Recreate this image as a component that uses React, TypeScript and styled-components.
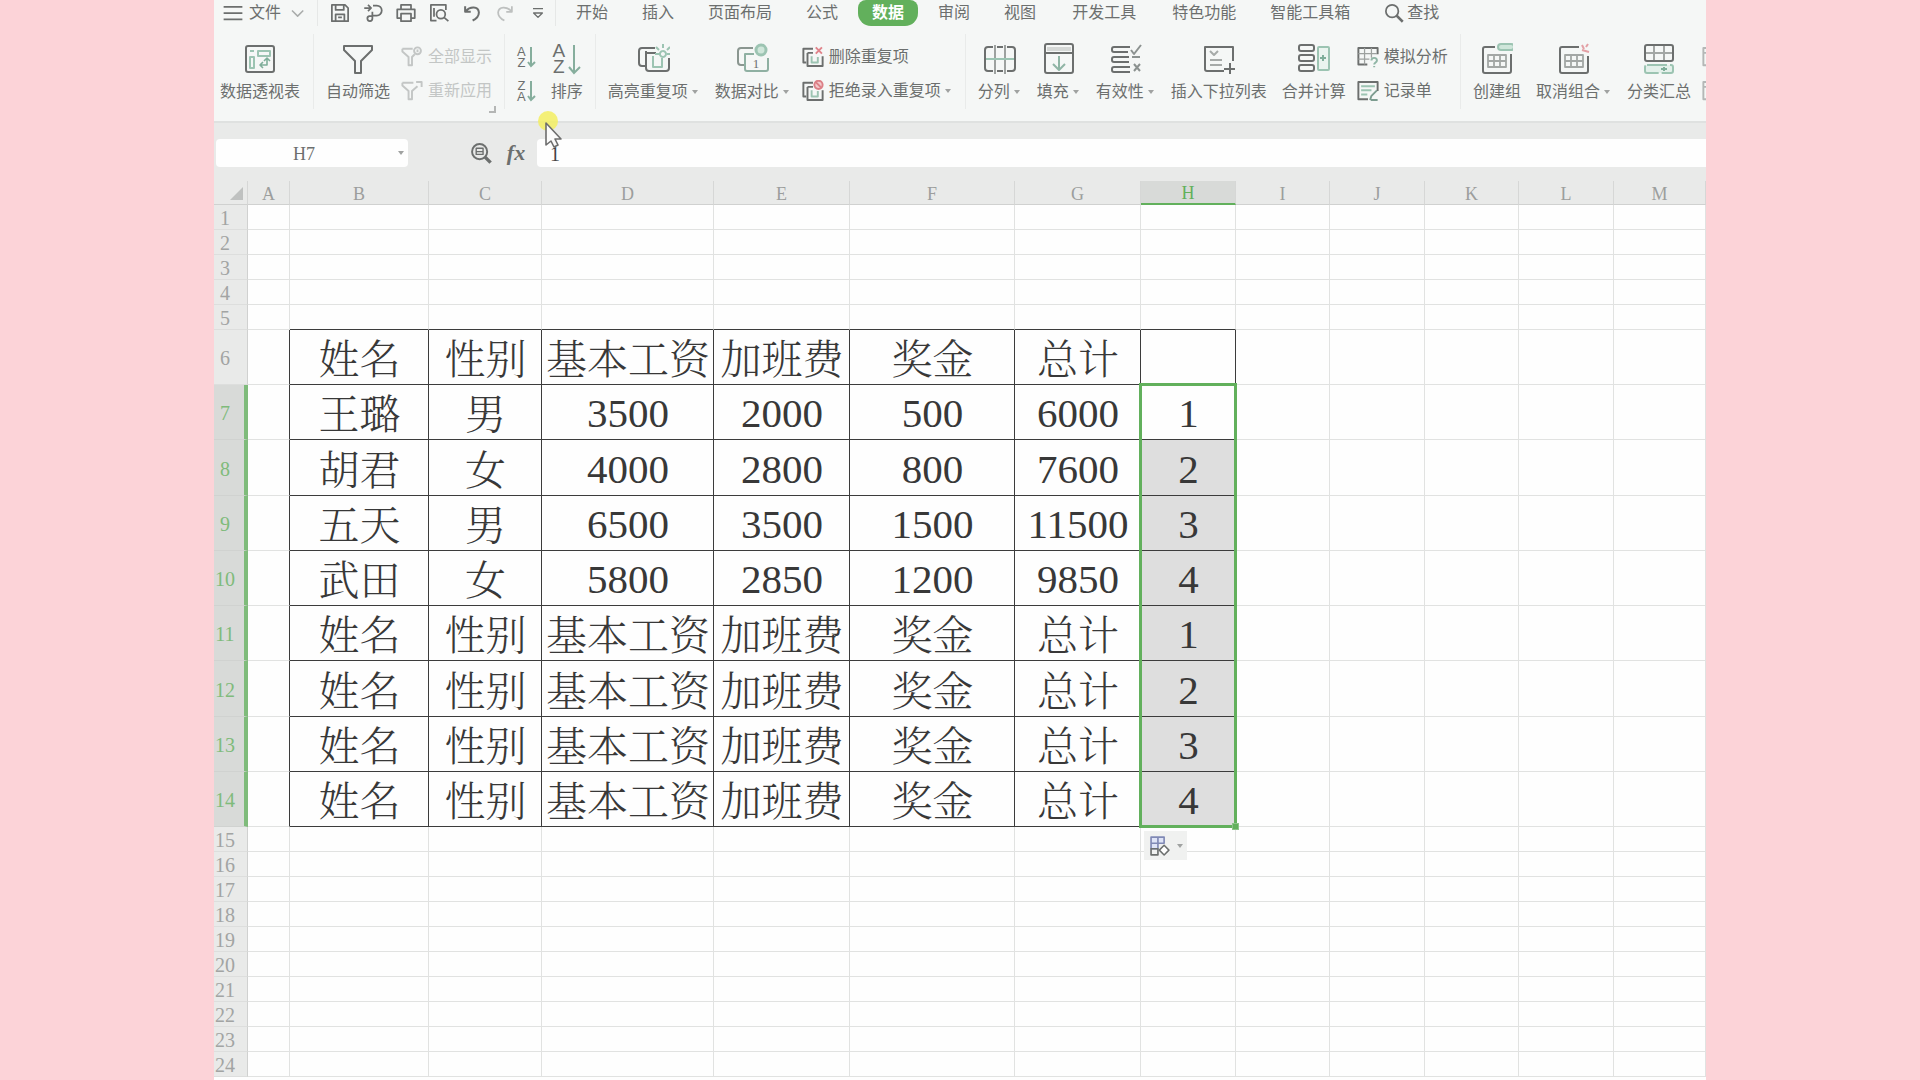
import React from "react";
import styled, { createGlobalStyle, css } from "styled-components";

const GREEN = "#62b05c";
const INK = "#6c6f6e";
const MINT = "#9cc4b2";
const UI_FONT = `"Liberation Sans", "Noto Sans CJK SC", sans-serif`;
const SHEET_FONT = `"Liberation Serif", "Noto Serif CJK SC", "Noto Sans CJK SC", serif`;

const GlobalStyle = createGlobalStyle`
  *, *::before, *::after { box-sizing: border-box; }
  body { margin: 0; background: #fcd3d8; font-family: ${UI_FONT}; }
  button, input { font: inherit; color: inherit; }
  svg { display: block; flex: none; }
`;

const Page = styled.div`
  height: 100vh;
  padding: 0 214px;
  overflow: hidden;
`;

const Window = styled.main`
  position: relative;
  display: flex;
  flex-direction: column;
  height: 100%;
  overflow: hidden;
  background: #fefefe;
  color: ${INK};
`;

const plainButton = css`
  border: 0;
  padding: 0;
  margin: 0;
  background: none;
  white-space: nowrap;
  cursor: pointer;
`;

/* ---------- menu bar ---------- */

const MenuBar = styled.header`
  display: flex;
  align-items: center;
  height: 26px;
  padding-left: 9px;
  background: #f5f7f6;
  font-size: 16px;
  line-height: 24px;
  flex: none;
`;

const FileButton = styled.button`
  ${plainButton}
  display: flex;
  align-items: center;
  gap: 6px;
  padding-right: 10px;
`;

const QuickTools = styled.div`
  display: flex;
  align-items: center;
  gap: 13px;
  height: 26px;
  padding: 0 7px 0 12px;
  border-left: 1px solid #e6e8e7;
  border-right: 1px solid #e6e8e7;
`;

const IconButton = styled.button<{ $faded?: boolean }>`
  ${plainButton}
  opacity: ${(p) => (p.$faded ? 0.4 : 1)};
`;

const Tabs = styled.nav`
  display: flex;
  gap: 6px;
  margin-left: 6px;
`;

const Tab = styled.button<{ $active?: boolean; $wide?: boolean }>`
  ${plainButton}
  height: 26px;
  padding: 0 ${(p) => (p.$wide ? 16 : 14)}px;
  ${(p) =>
    p.$active &&
    css`
      background: ${GREEN};
      color: #fff;
      font-weight: 700;
      border-radius: 8px 8px 13px 13px;
    `}
`;

const SearchButton = styled.button`
  ${plainButton}
  display: flex;
  align-items: center;
  gap: 3px;
  margin-left: 20px;
`;

/* ---------- ribbon ---------- */

const Ribbon = styled.section`
  display: flex;
  height: 97px;
  padding: 8px 0 12px;
  background: #f5f7f6;
  border-bottom: 2px solid #dfe1e0;
  font-size: 16px;
  line-height: 24px;
  overflow: hidden;
  flex: none;
`;

const Group = styled.div<{ $first?: boolean }>`
  position: relative;
  display: flex;
  gap: 15px;
  flex: none;
  padding: ${(p) => (p.$first ? "0 13px 0 6px" : "0 12px")};
  border-right: 1px solid #e9ebea;
`;

const Corner = styled.span`
  position: absolute;
  right: 8px;
  bottom: -4px;
  width: 7px;
  height: 7px;
  border-right: 2px solid #b4b6b5;
  border-bottom: 2px solid #b4b6b5;
`;

const Tool = styled.button`
  ${plainButton}
  display: flex;
  flex-direction: column;
  align-items: center;
  gap: 5px;
  height: 72px;
  padding-top: 9px;
`;

const ToolLabel = styled.span`
  display: flex;
  align-items: center;
`;

const Caret = styled.i`
  margin: 0 2px 0 4px;
  border: 3px solid transparent;
  border-top: 4px solid #a0a2a1;
  border-bottom: 0;
`;

const Stack = styled.div<{ $tight?: boolean }>`
  display: flex;
  flex-direction: column;
  gap: 10px;
  padding-top: 11px;
  margin-left: ${(p) => (p.$tight ? -4 : 0)}px;
`;

const SmallTool = styled.button`
  ${plainButton}
  display: flex;
  align-items: center;
  gap: 5px;
  height: 24px;
  &:disabled { color: #c3c6c5; cursor: default; }
`;

const SortMark = styled.span<{ $small?: boolean }>`
  display: flex;
  align-items: center;
  gap: ${(p) => (p.$small ? 1 : 3)}px;
  height: ${(p) => (p.$small ? 24 : 32)}px;
  font-size: ${(p) => (p.$small ? 13 : 19)}px;
  line-height: ${(p) => (p.$small ? 11 : 16)}px;
`;

const SortLetters = styled.span`
  display: flex;
  flex-direction: column;
  align-items: center;
`;

/* ---------- formula bar ---------- */

const FormulaBar = styled.section`
  display: flex;
  align-items: center;
  height: 58px;
  padding: 16px 0 14px 2px;
  background: #e9eae9;
  font-family: ${SHEET_FONT};
  font-size: 20px;
  flex: none;
`;

const NameBox = styled.div`
  display: flex;
  align-items: center;
  width: 192px;
  height: 28px;
  margin-right: 62px;
  background: #fefefe;
  border-radius: 4px;
`;

const NameInput = styled.input`
  flex: 1;
  min-width: 0;
  height: 28px;
  padding: 2px 0 0;
  border: 0;
  background: none;
  text-align: center;
  font-size: 18px;
  outline: 0;
`;

const CaretButton = styled.button`
  ${plainButton}
  display: flex;
  align-items: center;
  justify-content: center;
  width: 16px;
  height: 28px;
`;

const FxButton = styled.button`
  ${plainButton}
  width: 22px;
  margin: 0 10px 0 13px;
  font-style: italic;
  font-weight: 700;
  font-size: 22px;
  line-height: 28px;
`;

const FormulaInput = styled.input`
  flex: 1;
  min-width: 0;
  height: 28px;
  padding: 2px 0 0 13px;
  border: 0;
  border-radius: 4px 0 0 4px;
  background: #fefefe;
  color: #444;
  outline: 0;
`;

const Pointer = styled.div`
  position: absolute;
  left: 324px;
  top: 111px;
  pointer-events: none;
`;

/* ---------- sheet ---------- */

const SheetArea = styled.div`
  position: relative;
  flex: 1;
  min-height: 0;
  overflow: hidden;
`;

const Grid = styled.table`
  width: 100%;
  table-layout: fixed;
  border-collapse: separate;
  border-spacing: 0;
  font-family: ${SHEET_FONT};
`;

const ColHead = styled.th<{ $on?: boolean }>`
  height: 24px;
  padding: 2px 0 0;
  background: ${(p) => (p.$on ? "#d8dad8" : "#e9eae9")};
  border-right: 1px solid #d6d7d6;
  border-bottom: ${(p) => (p.$on ? `2px solid ${GREEN}` : "1px solid #d0d1d0")};
  color: ${(p) => (p.$on ? GREEN : "#9c9e9d")};
  font-size: 18px;
  font-weight: 400;
  line-height: 20px;
`;

const SelectAll = styled.i`
  display: block;
  width: 13px;
  height: 13px;
  margin-left: 16px;
  background: #bfc1c0;
  clip-path: polygon(100% 0, 100% 100%, 0 100%);
`;

const RowHead = styled.th<{ $on?: boolean }>`
  padding: 2px ${(p) => (p.$on ? 8 : 11)}px 0 0;
  background: ${(p) => (p.$on ? "#d8dad8" : "#e9eae9")};
  border-right: ${(p) => (p.$on ? "4px solid #7fbb7b" : "1px solid #d0d1d0")};
  border-bottom: 1px solid ${(p) => (p.$on ? "#d0d2d0" : "#dddedd")};
  color: ${(p) => (p.$on ? "#7fbb7b" : "#a2a4a3")};
  font-size: 20px;
  font-weight: 400;
  line-height: 20px;
`;

const Cell = styled.td<{ $right?: boolean; $bottom?: boolean; $shade?: boolean; $digits?: boolean }>`
  padding: ${(p) => (p.$digits ? 2 : 6)}px 0 0 1px;
  background: ${(p) => (p.$shade ? "#dedede" : "#fefefe")};
  border-right: 1px solid ${(p) => (p.$right ? "#3c3c3c" : "#e1e2e1")};
  border-bottom: 1px solid ${(p) => (p.$bottom ? "#3c3c3c" : "#e1e2e1")};
  color: #383838;
  font-size: 41px;
  font-weight: 300;
  line-height: 48px;
  text-align: center;
  white-space: nowrap;
`;

const Selection = styled.div`
  position: absolute;
  border: 3px solid ${GREEN};
  pointer-events: none;
  &::after {
    content: "";
    position: absolute;
    right: -5px;
    bottom: -5px;
    width: 7px;
    height: 7px;
    background: ${GREEN};
    border: 1px solid #8cc488;
  }
`;

const FillOptions = styled.button`
  ${plainButton}
  position: absolute;
  display: flex;
  align-items: center;
  gap: 2px;
  width: 43px;
  height: 29px;
  padding-left: 5px;
  background: #f0f1f0;
`;

/* ---------- icons ---------- */

type IconProps = { size?: number; children: React.ReactNode };

const Icon = ({ size = 32, children }: IconProps) => (
  <svg
    width={size}
    height={size}
    viewBox="0 0 32 32"
    fill="none"
    stroke={INK}
    strokeWidth={size < 24 ? 2.8 : 2}
    strokeLinejoin="round"
    aria-hidden="true"
  >
    {children}
  </svg>
);

const MenuIcon = () => (
  <Icon size={20}><path d="M1 6h30M1 16h30M1 26h30" /></Icon>
);
const ChevronIcon = () => (
  <Icon size={20}><path d="M8 12l9 9 9-9" stroke="#a9acab" strokeWidth="2.4" /></Icon>
);
const SaveIcon = () => (
  <Icon size={20}><path d="M3 3h21l5 5v21H3zM9 3v8h13V3M9 29V18h14v11M13 23h6" /></Icon>
);
const ExportIcon = () => (
  <Icon size={20}>
    <path d="M2 8h10M8 3l5 5-5 5M16 4h6a8 8 0 010 16h-7M15 14v11a4 4 0 11-5-4h5" />
  </Icon>
);
const PrintIcon = () => (
  <Icon size={20}><path d="M8 10V3h16v7M8 24H2V10h28v14h-6M8 17h16v12H8z" /></Icon>
);
const PreviewIcon = () => (
  <Icon size={20}>
    <path d="M12 28H3V3h24v8M8 8v14" />
    <circle cx="19" cy="18" r="7" />
    <path d="M24 23l7 6" />
  </Icon>
);
const UndoIcon = () => (
  <Icon size={20}><path d="M5 5v9h9M6 13c7-8 20-8 21 2 0 6-4 10-10 13" strokeWidth="3.2" /></Icon>
);
const RedoIcon = () => (
  <Icon size={20}><path d="M27 5v9h-9M26 13C19 5 6 5 5 15c0 6 4 10 10 13" /></Icon>
);
const MoreIcon = () => (
  <Icon size={20}><path d="M8 9h16M9 16l7 7 7-7z" strokeWidth="2.2" /></Icon>
);
const SearchIcon = () => (
  <Icon size={20}><circle cx="13" cy="13" r="10" /><path d="M20 20l10 10" strokeWidth="4" /></Icon>
);
const ZoomIcon = () => (
  <Icon size={22}>
    <circle cx="14" cy="14" r="11" />
    <path d="M9 9h10v9H9zM9 14h10" strokeWidth="2" />
    <path d="M22 22l8 8" strokeWidth="5" />
  </Icon>
);

const PivotIcon = () => (
  <Icon>
    <rect x="2" y="3" width="28" height="26" rx="2" />
    <path d="M6 8h4M14 8h12v5H14zM6 14h4v11H6z" stroke={MINT} />
    <path d="M23 15v7h-7M19 19l-3 3 3 3M20 18l3-3 3 3" stroke="#7fae9a" strokeWidth="1.6" />
  </Icon>
);
const FunnelIcon = () => (
  <Icon><path d="M2 3h28v4L19 18v12h-6V18L2 7z" /></Icon>
);
const ShowAllIcon = () => (
  <Icon size={22}>
    <g stroke="#c3c6c5"><path d="M2 4h15M2 4v4l9 8v12h5V16l4-4" /><circle cx="24" cy="7" r="5" /><path d="M24 5v4" /></g>
  </Icon>
);
const ReapplyIcon = () => (
  <Icon size={22}>
    <g stroke="#c3c6c5"><path d="M2 4h16M2 4v4l9 8v12h5V16l8-7" /><path d="M22 3h8v7" /></g>
  </Icon>
);

const SortIcon = ({ letters, small }: { letters: string[]; small?: boolean }) => (
  <SortMark $small={small} aria-hidden="true">
    <SortLetters>
      {letters.map((letter) => <span key={letter}>{letter}</span>)}
    </SortLetters>
    <svg width={small ? 9 : 13} height={small ? 22 : 32} viewBox={small ? "0 0 9 22" : "0 0 13 32"}>
      <path
        d={small ? "M4 1v19M1 16l3 4 4-4" : "M6 2v28M1 24l5 6 6-6"}
        fill="none"
        stroke="#86ae9d"
        strokeWidth={2}
      />
    </svg>
  </SortMark>
);

const HighlightIcon = () => (
  <Icon>
    <path d="M7 23H4a3 3 0 01-3-3V8a3 3 0 013-3h13M8 8v17a3 3 0 003 3h17a3 3 0 003-3V15M8 10h10" />
    <path d="M15 13v11h9V15" stroke={MINT} />
    <path d="M25 8a3 3 0 11-.1 0M25 1v4M18 4l3 3M32 4l-3 3M17 11h4M29 11h4" stroke={MINT} />
  </Icon>
);
const CompareIcon = () => (
  <Icon>
    <path d="M7 22H4a3 3 0 01-3-3V8a3 3 0 013-3h12" stroke="#8a9690" />
    <path d="M17 11H8v15a2 2 0 002 2h19a2 2 0 002-2V15" stroke="#8fb0a2" />
    <text x="19" y="25" fontSize="13" textAnchor="middle" fill={INK} stroke="none" fontFamily="Liberation Serif, serif">1</text>
    <circle cx="24" cy="7" r="5" stroke={MINT} strokeWidth="3" fill="#cfe6da" />
  </Icon>
);
const RemoveDupIcon = () => (
  <Icon size={22}>
    <path d="M6 24H2V4h14M8 10v19h22V15M8 10h8" />
    <path d="M14 15v9h9v-8" stroke={MINT} />
    <path d="M20 2l9 9M29 2l-9 9" stroke="#e0838a" />
  </Icon>
);
const RejectDupIcon = () => (
  <Icon size={22}>
    <path d="M6 24H2V4h14M8 10v19h22V15M8 10h8" />
    <path d="M14 15v9h9v-8" stroke={MINT} />
    <circle cx="24" cy="7" r="6" stroke="#dc7f86" fill="#f3c9cc" />
    <path d="M20 3l8 8" stroke="#dc7f86" />
  </Icon>
);
const SplitIcon = () => (
  <Icon>
    <path d="M9 4H4a3 3 0 00-3 3v18a3 3 0 003 3h5M23 4h5a3 3 0 013 3v18a3 3 0 01-3 3h-5M13 4h6M13 28h6" />
    <path d="M11 2v29M21 2v29" stroke="#9da19f" />
    <path d="M2 16h28" stroke={MINT} />
  </Icon>
);
const FillIcon = () => (
  <Icon>
    <rect x="2" y="1" width="28" height="29" rx="2" />
    <path d="M2 10h28" />
    <path d="M4 6h24" stroke="#d5d8d6" strokeWidth="4" />
    <path d="M16 13v13M10 21l6 6 6-6" stroke="#8fb5a5" />
  </Icon>
);
const ValidIcon = () => (
  <Icon>
    <path d="M20 4H4a2 2 0 00-2 2v1a2 2 0 002 2h14M19 14H4a2 2 0 00-2 2v1a2 2 0 002 2h15M20 24H4a2 2 0 00-2 2v1a2 2 0 002 2h16" />
    <path d="M21 7l3 4 7-9M22 14h8M24 21l6 7M30 21l-6 7" stroke="#8c9290" />
  </Icon>
);
const DropListIcon = () => (
  <Icon>
    <path d="M21 28H4a2 2 0 01-2-2V4h28v14" />
    <path d="M7 8l4 4 4-4M7 17h12M7 22h12" stroke="#a6aaa8" />
    <path d="M27 20v11M21 26h11" />
  </Icon>
);
const ConsolidateIcon = () => (
  <Icon>
    <rect x="1" y="2" width="15" height="6" rx="2" />
    <rect x="1" y="12" width="15" height="6" rx="2" />
    <rect x="1" y="22" width="15" height="6" rx="2" />
    <rect x="20" y="4" width="11" height="23" rx="1" stroke={MINT} fill="#eaf4ef" />
    <path d="M22 15h6M25 12v6" stroke="#7fae9a" />
  </Icon>
);
const WhatIfIcon = () => (
  <Icon size={22}>
    <path d="M30 12V3H2v24h13" />
    <path d="M2 11h27M2 19h16M11 3v24M21 3v14" strokeWidth="1.8" stroke="#9da19f" />
    <path d="M21 21c0-5 8-5 8 0 0 3-4 3-4 6M25 29v2" stroke="#8fb5a5" />
  </Icon>
);
const FormIcon = () => (
  <Icon size={22}>
    <path d="M30 16V3H2v25h14" />
    <path d="M6 9h20M6 15h15M6 21h9" stroke={MINT} />
    <path d="M19 29l2-6 8-8M20 29h10" stroke="#7c9c8f" />
  </Icon>
);
const TableBody = () => (
  <path d="M7 12h18v12H7zM13 12v12M19 12v12M7 18h18" stroke="#a3a7a5" strokeWidth="1.8" />
);
const GroupIcon = () => (
  <Icon>
    <path d="M14 4H4a2 2 0 00-2 2v22a2 2 0 002 2h24a2 2 0 002-2V11" />
    <TableBody />
    <rect x="17" y="1" width="16" height="6" rx="3" fill="#cfe6da" stroke={MINT} />
  </Icon>
);
const UngroupIcon = () => (
  <Icon>
    <path d="M21 4H4a2 2 0 00-2 2v22a2 2 0 002 2h24a2 2 0 002-2V13" />
    <TableBody />
    <path d="M24 2l2 4M30 1l-2 3M24 7l7 2" stroke="#e3a0a5" />
  </Icon>
);
const SubtotalIcon = () => (
  <Icon>
    <rect x="2" y="2" width="28" height="16" rx="2" />
    <path d="M3 10h26M11 3v14M21 3v14" stroke="#a3a7a5" />
    <rect x="2" y="22" width="28" height="8" rx="2" fill="#e3f0ea" stroke={MINT} strokeDasharray="20 3" />
    <path d="M18 26h6M21 24v4" stroke="#7fae9a" />
  </Icon>
);
const PanelIcon = () => (
  <Icon size={22}><path d="M2 3h28v25H2zM2 10h28" stroke="#b4b7b6" /></Icon>
);
const FillOptionsIcon = () => (
  <Icon size={22}>
    <path d="M3 3h10v9H3zM13 3h9v9h-9zM3 12h10v8H3z" stroke="#8089b5" fill="#dfe4f7" strokeWidth="2.4" />
    <path d="M3 20h10v9H3z" strokeWidth="2.4" />
    <path d="M22 15l7 7-7 7-7-7z" fill="#fff" strokeWidth="2.2" />
  </Icon>
);

/* ---------- data ---------- */

const HEAD = ["姓名", "性别", "基本工资", "加班费", "奖金", "总计"];

const COLUMNS: { name: string; width?: number }[] = [
  { name: "A", width: 42 },
  { name: "B", width: 139 },
  { name: "C", width: 113 },
  { name: "D", width: 172 },
  { name: "E", width: 136 },
  { name: "F", width: 165 },
  { name: "G", width: 126 },
  { name: "H", width: 95 },
  { name: "I", width: 94 },
  { name: "J", width: 95 },
  { name: "K", width: 94 },
  { name: "L", width: 95 },
  { name: "M" },
];

const DATA: Record<number, string[]> = {
  6: [...HEAD, ""],
  7: ["王璐", "男", "3500", "2000", "500", "6000", "1"],
  8: ["胡君", "女", "4000", "2800", "800", "7600", "2"],
  9: ["五天", "男", "6500", "3500", "1500", "11500", "3"],
  10: ["武田", "女", "5800", "2850", "1200", "9850", "4"],
  11: [...HEAD, "1"],
  12: [...HEAD, "2"],
  13: [...HEAD, "3"],
  14: [...HEAD, "4"],
};

const ROW_HEADER = 34;
const HEADER_HEIGHT = 24;
const ROWS = Array.from({ length: 24 }, (_, i) => i + 1);
const rowHeight = (row: number) => (!DATA[row] ? 25 : row === 8 || row === 12 ? 56 : 55);
const rowBottom = (row: number) =>
  ROWS.slice(0, row).reduce((sum, r) => sum + rowHeight(r), HEADER_HEIGHT);
const colRight = (index: number) =>
  COLUMNS.slice(0, index + 1).reduce((sum, c) => sum + (c.width ?? 0), ROW_HEADER);

const SELECTED_COL = 7;
const FIRST_SELECTED = 7;
const LAST_SELECTED = 14;
const isSelectedRow = (row: number) => row >= FIRST_SELECTED && row <= LAST_SELECTED;

const TABS = ["开始", "插入", "页面布局", "公式", "数据", "审阅", "视图", "开发工具", "特色功能", "智能工具箱"];

/* ---------- parts ---------- */

const BigTool = ({ icon, label, caret }: { icon: React.ReactNode; label: string; caret?: boolean }) => (
  <Tool type="button">
    {icon}
    <ToolLabel>{label}{caret && <Caret />}</ToolLabel>
  </Tool>
);

const Sheet = () => {
  const left = colRight(SELECTED_COL - 1);
  const right = colRight(SELECTED_COL);
  const top = rowBottom(FIRST_SELECTED - 1);
  const bottom = rowBottom(LAST_SELECTED);
  return (
    <SheetArea>
      <Grid>
        <colgroup>
          <col style={{ width: ROW_HEADER }} />
          {COLUMNS.map((c) => <col key={c.name} style={{ width: c.width }} />)}
        </colgroup>
        <thead>
          <tr>
            <ColHead aria-label="全选"><SelectAll /></ColHead>
            {COLUMNS.map((c, i) => (
              <ColHead key={c.name} scope="col" $on={i === SELECTED_COL}>{c.name}</ColHead>
            ))}
          </tr>
        </thead>
        <tbody>
          {ROWS.map((row) => (
            <tr key={row} style={{ height: rowHeight(row) }}>
              <RowHead scope="row" $on={isSelectedRow(row)}>{row}</RowHead>
              {COLUMNS.map((c, i) => {
                const inTable = i >= 1 && i <= SELECTED_COL;
                const hasData = Boolean(DATA[row]);
                const text = inTable && hasData ? DATA[row][i - 1] : "";
                return (
                  <Cell
                    key={c.name}
                    $right={hasData && i <= SELECTED_COL}
                    $bottom={inTable && (hasData || row === 5)}
                    $shade={i === SELECTED_COL && row > FIRST_SELECTED && row <= LAST_SELECTED}
                    $digits={/^\d*$/.test(text)}
                  >
                    {text || null}
                  </Cell>
                );
              })}
            </tr>
          ))}
        </tbody>
      </Grid>
      <Selection
        style={{ left: left - 2, top: top - 2, width: right - left + 3, height: bottom - top + 3 }}
      />
      <FillOptions type="button" aria-label="自动填充选项" style={{ left: left + 3, top: bottom + 4 }}>
        <FillOptionsIcon />
        <Caret />
      </FillOptions>
    </SheetArea>
  );
};

export default function App() {
  return (
    <Page>
      <GlobalStyle />
      <Window>
        <MenuBar>
          <FileButton type="button"><MenuIcon />文件<ChevronIcon /></FileButton>
          <QuickTools>
            <IconButton type="button" aria-label="保存"><SaveIcon /></IconButton>
            <IconButton type="button" aria-label="输出"><ExportIcon /></IconButton>
            <IconButton type="button" aria-label="打印"><PrintIcon /></IconButton>
            <IconButton type="button" aria-label="打印预览"><PreviewIcon /></IconButton>
            <IconButton type="button" aria-label="撤销"><UndoIcon /></IconButton>
            <IconButton type="button" aria-label="恢复" $faded><RedoIcon /></IconButton>
            <IconButton type="button" aria-label="更多"><MoreIcon /></IconButton>
          </QuickTools>
          <Tabs>
            {TABS.map((tab) => (
              <Tab key={tab} type="button" $active={tab === "数据"} $wide={tab === "开发工具"}>{tab}</Tab>
            ))}
          </Tabs>
          <SearchButton type="button"><SearchIcon />查找</SearchButton>
        </MenuBar>

        <Ribbon>
          <Group $first>
            <BigTool icon={<PivotIcon />} label="数据透视表" />
          </Group>
          <Group>
            <BigTool icon={<FunnelIcon />} label="自动筛选" />
            <Stack $tight>
              <SmallTool type="button" disabled><ShowAllIcon />全部显示</SmallTool>
              <SmallTool type="button" disabled><ReapplyIcon />重新应用</SmallTool>
            </Stack>
            <Corner />
          </Group>
          <Group>
            <Stack>
              <SmallTool type="button" aria-label="升序"><SortIcon small letters={["A", "Z"]} /></SmallTool>
              <SmallTool type="button" aria-label="降序"><SortIcon small letters={["Z", "A"]} /></SmallTool>
            </Stack>
            <BigTool icon={<SortIcon letters={["A", "Z"]} />} label="排序" />
          </Group>
          <Group>
            <BigTool icon={<HighlightIcon />} label="高亮重复项" caret />
            <BigTool icon={<CompareIcon />} label="数据对比" caret />
            <Stack $tight>
              <SmallTool type="button"><RemoveDupIcon />删除重复项</SmallTool>
              <SmallTool type="button"><RejectDupIcon /><ToolLabel>拒绝录入重复项<Caret /></ToolLabel></SmallTool>
            </Stack>
          </Group>
          <Group>
            <BigTool icon={<SplitIcon />} label="分列" caret />
            <BigTool icon={<FillIcon />} label="填充" caret />
            <BigTool icon={<ValidIcon />} label="有效性" caret />
            <BigTool icon={<DropListIcon />} label="插入下拉列表" />
            <BigTool icon={<ConsolidateIcon />} label="合并计算" />
            <Stack $tight>
              <SmallTool type="button"><WhatIfIcon />模拟分析</SmallTool>
              <SmallTool type="button"><FormIcon />记录单</SmallTool>
            </Stack>
          </Group>
          <Group>
            <BigTool icon={<GroupIcon />} label="创建组" />
            <BigTool icon={<UngroupIcon />} label="取消组合" caret />
            <BigTool icon={<SubtotalIcon />} label="分类汇总" />
            <Stack $tight>
              <SmallTool type="button" aria-label="展开"><PanelIcon /></SmallTool>
              <SmallTool type="button" aria-label="折叠"><PanelIcon /></SmallTool>
            </Stack>
          </Group>
        </Ribbon>

        <FormulaBar>
          <NameBox>
            <NameInput aria-label="名称框" defaultValue="H7" />
            <CaretButton type="button" aria-label="选择名称"><Caret /></CaretButton>
          </NameBox>
          <IconButton type="button" aria-label="查看"><ZoomIcon /></IconButton>
          <FxButton type="button">fx</FxButton>
          <FormulaInput aria-label="编辑栏" defaultValue="1" />
        </FormulaBar>

        <Sheet />

        <Pointer>
          <svg width="26" height="38" viewBox="0 0 26 38" aria-hidden="true">
            <circle cx="10" cy="10" r="10" fill="#f3ee62" opacity="0.85" />
            <path d="M8 12v22l5-4 3 6 4-2-3-6h6z" fill="#fbfbfb" stroke="#6d6d6d" strokeWidth="1.6" strokeLinejoin="round" />
          </svg>
        </Pointer>
      </Window>
    </Page>
  );
}
